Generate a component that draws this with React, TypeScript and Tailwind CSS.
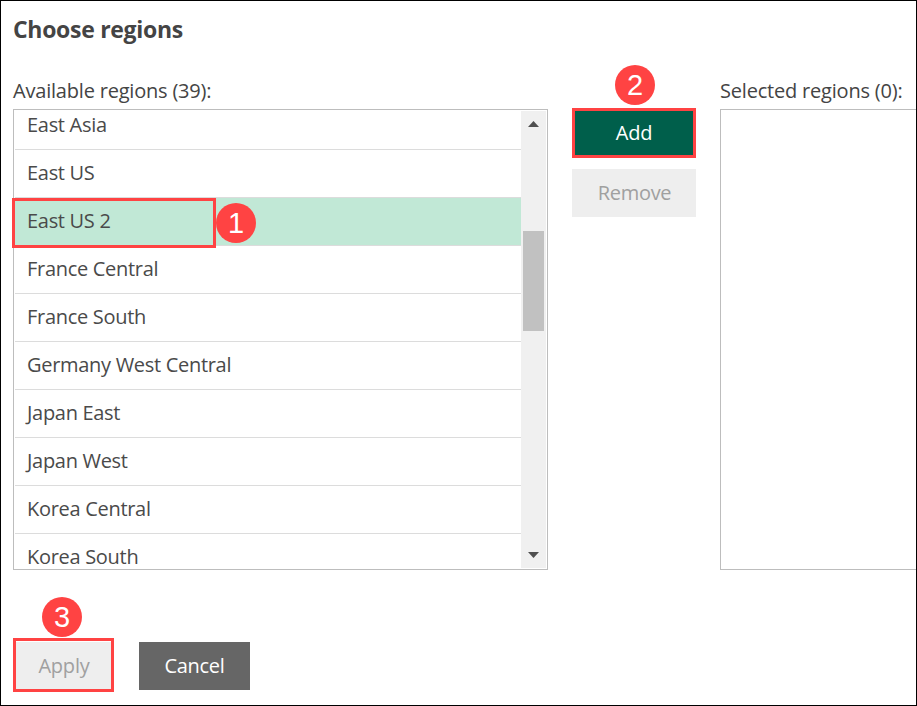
const regions = [
  'East Asia',
  'East US',
  'East US 2',
  'France Central',
  'France South',
  'Germany West Central',
  'Japan East',
  'Japan West',
  'Korea Central',
  'Korea South',
];

function Badge({ n, className }: { n: number; className: string }) {
  return (
    <span
      className={`absolute z-10 flex size-10 items-center justify-center rounded-full bg-[#ff4343] pt-px font-['Liberation_Sans',sans-serif] text-[29px] leading-none tracking-normal text-white ${className}`}
    >
      {n}
    </span>
  );
}

function Outline({ className }: { className: string }) {
  return <span className={`pointer-events-none absolute border-3 border-[#ff4343] ${className}`} />;
}

export default function App() {
  return (
    <div className="flex h-[706px] w-[917px] flex-col overflow-hidden border border-black bg-white pl-3 font-['Open_Sans',sans-serif] text-[20px] tracking-[-0.2px] text-[#444]">
      <h1 className="mt-[13px] h-[30px] text-[23px] leading-[30px] font-bold tracking-[-0.3px]">Choose regions</h1>
      <div className="mt-[33px] flex">
        <section className="w-[535px] shrink-0">
          <h2 className="h-[32px] leading-[28px]">Available regions (39):</h2>
          <div className="relative">
            <div className="flex h-[461px] border border-[#bdbdbd] p-px">
              <div className="flex-1 overflow-hidden">
                <ul className="-mt-[9px] tracking-[-0.3px] text-[#4a4a4a]">
                  {regions.map((r) => (
                    <li
                      key={r}
                      className={`h-12 border-b border-[#dcdcdc] pl-3 leading-[46px] ${r === 'East US 2' ? 'bg-[#c1e8d6]' : ''}`}
                    >
                      {r}
                    </li>
                  ))}
                </ul>
              </div>
              <div className="flex w-[25px] flex-col items-center bg-[#f0f0f0]">
                <svg className="mt-[10px] h-[6px] w-[11px]" viewBox="0 0 11 6" fill="#505050">
                  <path d="M0 6L5.5 0L11 6Z" />
                </svg>
                <div className="mt-[104px] mr-px h-[100px] w-[21px] bg-[#c1c1c1]" />
                <svg className="mt-auto mb-[10px] h-[6px] w-[11px]" viewBox="0 0 11 6" fill="#505050">
                  <path d="M0 0H11L5.5 6Z" />
                </svg>
              </div>
            </div>
            <Outline className="top-[89px] -left-px h-[50px] w-[204px]" />
            <Badge n={1} className="top-[94px] left-[203px]" />
          </div>
        </section>
        <div className="ml-6 flex w-[124px] shrink-0 flex-col pt-[32px]">
          <div className="relative h-12">
            <button className="h-12 w-full bg-[#005f4b] leading-[46px] text-white">Add</button>
            <Outline className="-top-px left-0 h-[50px] w-[124px]" />
            <Badge n={2} className="-top-[44px] left-[43px]" />
          </div>
          <button className="mt-3 h-12 bg-[#eee] pl-px leading-[46px] tracking-[-0.3px] text-[#a0a0a0]">Remove</button>
        </div>
        <section className="ml-6 flex-1">
          <h2 className="h-[32px] leading-[28px] whitespace-nowrap">Selected regions (0):</h2>
          <div className="h-[461px] border border-r-0 border-[#bdbdbd]" />
        </section>
      </div>
      <div className="mt-[72px] flex gap-[25px]">
        <div className="relative">
          <button className="h-12 w-[101px] bg-[#eee] pl-px leading-[46px] text-[#a0a0a0]">Apply</button>
          <Outline className="-top-1 left-0 h-[54px] w-[101px]" />
          <Badge n={3} className="-top-[45px] left-[29px]" />
        </div>
        <button className="h-12 w-[111px] bg-[#666] leading-[46px] tracking-[-0.3px] text-white">Cancel</button>
      </div>
    </div>
  );
}
